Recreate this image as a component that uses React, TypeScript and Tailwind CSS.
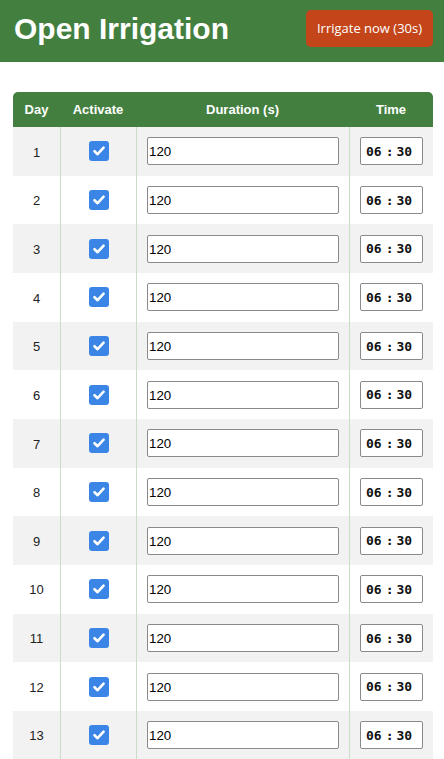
import React from "react";

const DAYS = Array.from({ length: 31 }, (_, i) => i + 1);

function CheckBox() {
  return (
    <div className="flex h-5 w-5 items-center justify-center rounded-[3px] bg-[#3a85e5]">
      <svg width="14" height="14" viewBox="0 0 14 14" fill="none">
        <path d="M2.5 7.2 L5.6 10.2 L11.6 3.6" stroke="white" strokeWidth="2.6" strokeLinecap="round" strokeLinejoin="round" />
      </svg>
    </div>
  );
}

export default function App() {
  return (
    <div className="min-h-screen bg-white font-['Liberation_Sans',Arial,sans-serif]">
      <header className="flex h-[62px] items-start justify-between bg-[#437f3f] pl-[14px] pr-[11px] pt-[10px]">
        <h1 className="text-[30px] font-bold leading-[37px] text-white">Open Irrigation</h1>
        <button
          type="button"
          className="h-[37px] w-[127px] rounded-[5px] bg-[#c4451a] font-['Open_Sans',sans-serif] text-[13px] text-white"
        >
          Irrigate now (30s)
        </button>
      </header>

      <div className="ml-[13px] mt-[30px] w-[420px] pb-6">
        <div className="grid h-[35px] grid-cols-[47px_76px_213px_84px] items-center rounded-t-[5px] bg-[#437f3f] text-center text-[13px] font-bold text-white">
          <div>Day</div>
          <div>Activate</div>
          <div>Duration (s)</div>
          <div>Time</div>
        </div>

        {DAYS.map((day) => (
          <div
            key={day}
            className={`grid h-[48.67px] grid-cols-[47px_76px_213px_84px] ${day % 2 === 1 ? "bg-[#f2f2f2]" : "bg-white"}`}
          >
            <div className="flex items-center justify-center pt-[2px] text-[13px] text-[#222]">{day}</div>
            <div className="flex items-center justify-center border-l border-[#c8dfc5]">
              <CheckBox />
            </div>
            <div className="flex items-center border-l border-[#c8dfc5] pl-[10px] pr-[10px]">
              <div className="flex h-[28px] w-full items-center rounded-[2px] border border-[#8a8a8a] bg-white pl-[1px] pt-[2px] text-[13.33px] text-black">
                120
              </div>
            </div>
            <div className="flex items-center border-l border-[#c8dfc5] pl-[10px] pr-[10px]">
              <div className="flex h-[28px] w-full items-center rounded-[2px] border border-[#8a8a8a] bg-white pl-[5px] pt-[1px] font-['DejaVu_Sans_Mono',monospace] text-[13px] font-semibold text-[#111]">
                <span>06</span>
                <span className="ml-[4px] mr-[1px]">:</span>
                <span className="ml-[2px]">30</span>
              </div>
            </div>
          </div>
        ))}
      </div>
    </div>
  );
}
